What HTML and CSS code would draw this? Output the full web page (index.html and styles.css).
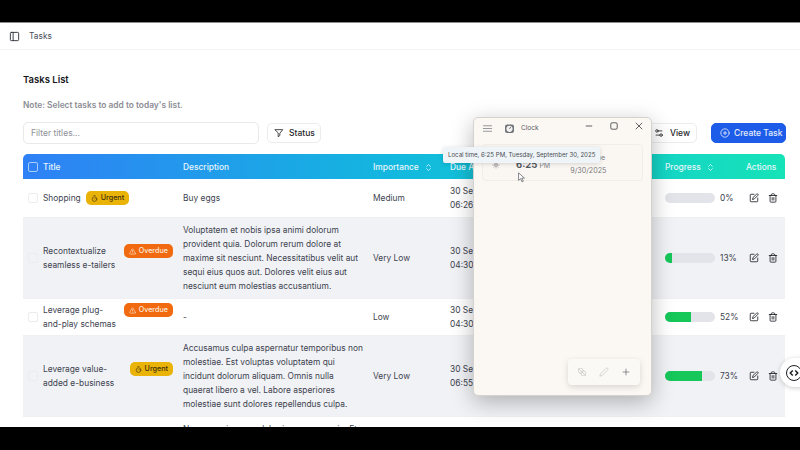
FILE: index.html
```html
<!DOCTYPE html>
<html lang="en">
<head>
    <meta charset="UTF-8">
    <meta name="viewport" content="width=device-width, initial-scale=1.0">
    <title>Tasks</title>
    <link rel="stylesheet" href="styles.css">
</head>
<body>

    <!-- icons used more than once -->
    <svg class="defs" width="0" height="0">
        <symbol id="i-timer" viewBox="0 0 24 24"><path d="M10 2h4M12 14l3-3"/><circle cx="12" cy="14" r="8"/></symbol>
        <symbol id="i-alert" viewBox="0 0 24 24"><path d="M21.7 18 13.7 4a2 2 0 0 0-3.5 0l-8 14a2 2 0 0 0 1.8 3h16a2 2 0 0 0 1.7-3Z"/><path d="M12 9v4M12 17h.01"/></symbol>
        <symbol id="i-sort" viewBox="0 0 24 24"><path d="m7 15 5 5 5-5M7 9l5-5 5 5"/></symbol>
        <symbol id="i-edit" viewBox="0 0 24 24"><path d="M12 3H5a2 2 0 0 0-2 2v14a2 2 0 0 0 2 2h14a2 2 0 0 0 2-2v-7"/><path d="M18.4 2.6a2.1 2.1 0 0 1 3 3L12.4 14.600l-4 1 1-4Z"/></symbol>
        <symbol id="i-trash" viewBox="0 0 24 24"><path d="M3 6h18M19 6v14a2 2 0 0 1-2 2H7a2 2 0 0 1-2-2V6M8 6V4a2 2 0 0 1 2-2h4a2 2 0 0 1 2 2v2M10 11v6M14 11v6"/></symbol>
    </svg>

    <div class="black-bar top"></div>

    <div class="app">
        <header class="topbar">
            <svg class="icon panel-icon" viewBox="0 0 24 24"><rect x="3" y="3" width="18" height="18" rx="2"/><path d="M9 3v18"/></svg>
            <span>Tasks</span>
        </header>

        <main class="content">
            <h1>Tasks List</h1>
            <p class="note">Note: Select tasks to add to today's list.</p>

            <div class="toolbar">
                <input class="filter" type="text" placeholder="Filter titles...">
                <button class="btn status-btn">
                    <svg class="icon" viewBox="0 0 24 24"><path d="M3 4h18l-7 8.500V18l-4 3v-8.500Z"/></svg>
                    Status
                </button>
                <button class="btn view-btn">
                    <svg class="icon" viewBox="0 0 24 24"><path d="M14 17H5M19 7h-9"/><circle cx="17" cy="17" r="3"/><circle cx="7" cy="7" r="3"/></svg>
                    View
                </button>
                <button class="btn create-btn">
                    <svg class="icon" viewBox="0 0 24 24"><circle cx="12" cy="12" r="10"/><path d="M8 12h8M12 8v8"/></svg>
                    Create Task
                </button>
            </div>

            <table class="tasks">
                <colgroup>
                    <col class="c-title"><col class="c-desc"><col class="c-imp"><col class="c-due"><col class="c-prog"><col class="c-act">
                </colgroup>
                <thead>
                    <tr>
                        <th><div class="title-cell"><span class="check head-check"></span>Title</div></th>
                        <th>Description</th>
                        <th>Importance <svg class="icon sort"><use href="#i-sort"/></svg></th>
                        <th>Due At</th>
                        <th>Progress <svg class="icon sort"><use href="#i-sort"/></svg></th>
                        <th class="actions-head">Actions</th>
                    </tr>
                </thead>
                <tbody>
                    <tr>
                        <td><div class="title-cell"><span class="check"></span><div class="title-main"><span>Shopping</span><span class="badge urgent"><svg class="icon"><use href="#i-timer"/></svg>Urgent</span></div></div></td>
                        <td>Buy eggs</td>
                        <td>Medium</td>
                        <td>30 Sep 2025<br>06:26 PM</td>
                        <td><div class="progress"><div class="bar"><div class="fill" style="width: 0%"></div></div><span>0%</span></div></td>
                        <td><div class="actions"><svg class="icon"><use href="#i-edit"/></svg><svg class="icon"><use href="#i-trash"/></svg></div></td>
                    </tr>
                    <tr>
                        <td><div class="title-cell"><span class="check"></span><div class="title-main"><span>Recontextualize seamless e-tailers</span><span class="badge overdue"><svg class="icon"><use href="#i-alert"/></svg>Overdue</span></div></div></td>
                        <td>Voluptatem et nobis ipsa animi dolorum provident quia. Dolorum rerum dolore at maxime sit nesciunt. Necessitatibus velit aut sequi eius quos aut. Dolores velit eius aut nesciunt eum molestias accusantium.</td>
                        <td>Very Low</td>
                        <td>30 Sep 2025<br>04:30 PM</td>
                        <td><div class="progress"><div class="bar"><div class="fill" style="width: 13%"></div></div><span>13%</span></div></td>
                        <td><div class="actions"><svg class="icon"><use href="#i-edit"/></svg><svg class="icon"><use href="#i-trash"/></svg></div></td>
                    </tr>
                    <tr>
                        <td><div class="title-cell"><span class="check"></span><div class="title-main"><span>Leverage plug-and-play schemas</span><span class="badge overdue"><svg class="icon"><use href="#i-alert"/></svg>Overdue</span></div></div></td>
                        <td>-</td>
                        <td>Low</td>
                        <td>30 Sep 2025<br>04:30 PM</td>
                        <td><div class="progress"><div class="bar"><div class="fill" style="width: 52%"></div></div><span>52%</span></div></td>
                        <td><div class="actions"><svg class="icon"><use href="#i-edit"/></svg><svg class="icon"><use href="#i-trash"/></svg></div></td>
                    </tr>
                    <tr>
                        <td><div class="title-cell"><span class="check"></span><div class="title-main"><span>Leverage value-added e-business</span><span class="badge urgent"><svg class="icon"><use href="#i-timer"/></svg>Urgent</span></div></div></td>
                        <td>Accusamus culpa aspernatur temporibus non molestiae. Est voluptas voluptatem qui incidunt dolorum aliquam. Omnis nulla quaerat libero a vel. Labore asperiores molestiae sunt dolores repellendus culpa.</td>
                        <td>Very Low</td>
                        <td>30 Sep 2025<br>06:55 PM</td>
                        <td><div class="progress"><div class="bar"><div class="fill" style="width: 73%"></div></div><span>73%</span></div></td>
                        <td><div class="actions"><svg class="icon"><use href="#i-edit"/></svg><svg class="icon"><use href="#i-trash"/></svg></div></td>
                    </tr>
                    <tr>
                        <td></td>
                        <td>Nemo omnis neque laboriosam ea non in. Et</td>
                        <td></td><td></td><td></td><td></td>
                    </tr>
                </tbody>
            </table>
        </main>

        <!-- round floating button on the right edge -->
        <div class="float-btn">
            <div class="float-ring">
                <svg viewBox="0 0 24 24"><path d="m9 6-6 6 6 6M15 6l6 6-6 6"/></svg>
            </div>
        </div>
    </div>

    <div class="black-bar bottom"></div>

    <!-- Clock window on top of the page -->
    <div class="clock">
        <div class="clock-title">
            <svg class="icon menu" viewBox="0 0 24 24"><path d="M3 6h18M3 12h18M3 18h18"/></svg>
            <svg class="clock-logo" viewBox="0 0 16 16"><rect x="1.500" y="2" width="13" height="12.500" rx="3" fill="#6f7278"/><circle cx="8" cy="8.500" r="4.500" fill="#f3f2f0"/><path d="M8 8.500 10 5.500" stroke="#555" stroke-width="1.200"/></svg>
            <span class="clock-name">Clock</span>
            <div class="win-btns">
                <svg viewBox="0 0 10 10"><path d="M1 5h8"/></svg>
                <svg viewBox="0 0 10 10"><rect x="1" y="1" width="8" height="8" rx="1.500"/></svg>
                <svg viewBox="0 0 10 10"><path d="m1 1 8 8M9 1 1 9"/></svg>
            </div>
        </div>
        <div class="clock-card">
            <svg class="sun" viewBox="0 0 24 24"><circle cx="12" cy="12" r="4"/><path d="M12 2v3M12 19v3M2 12h3M19 12h3M5 5l2 2M17 17l2 2M5 19l2-2M17 7l2-2"/></svg>
            <div class="clock-time"><b>6:25</b> PM</div>
            <div class="clock-place">
                <span>Local time</span>
                <span>9/30/2025</span>
            </div>
        </div>
        <div class="clock-tools">
            <svg viewBox="0 0 24 24"><circle cx="9" cy="9" r="6"/><circle cx="15" cy="15" r="6"/><path d="M3 3l18 18"/></svg>
            <svg viewBox="0 0 24 24"><path d="M17 3a2.800 2.800 0 0 1 4 4L7.500 20.500 2 22l1.500-5.500Z"/></svg>
            <svg class="plus" viewBox="0 0 24 24"><path d="M12 4v16M4 12h16"/></svg>
        </div>
    </div>

    <div class="tooltip">Local time, 6:25 PM, Tuesday, September 30, 2025</div>

    <svg class="cursor" viewBox="0 0 12 18"><path d="M1 1v13l3.500-3 2.500 5.500 2-1L6.500 10H11Z"/></svg>

</body>
</html>
```

FILE: styles.css
```css
* {
    box-sizing: border-box;
}
body {
    margin: 0;
    width: 800px;
    height: 450px;
    overflow: hidden;
    position: relative;
    display: flex;
    flex-direction: column;
    font-family: Inter, "Noto Sans", sans-serif;
    font-size: 8.400px;
    line-height: 14px;
    color: #3d4350;
    background: #000;
}
.defs {
    position: absolute;
}
.black-bar {
    background: #000;
    flex: none;
}
.black-bar.top {
    height: 22px;
}
.black-bar.bottom {
    height: 23px;
}
.icon {
    width: 10px;
    height: 10px;
    fill: none;
    stroke: currentColor;
    stroke-width: 2;
    stroke-linecap: round;
    stroke-linejoin: round;
    flex: none;
}

.app {
    height: 405px;
    background: #fff;
    overflow: hidden;
    position: relative;
    border-top: 1px solid #8a8a8a;
}
.topbar {
    height: 27px;
    display: flex;
    align-items: center;
    gap: 9px;
    padding-left: 9px;
    border-bottom: 1px solid #f4f4f5;
    color: #4a4f5b;
}
.panel-icon {
    width: 11px;
    height: 11px;
    color: #2c3038;
}
.content {
    padding: 23px 14px 0 23px;
}
h1 {
    margin: 0;
    font-size: 9.500px;
    line-height: 14px;
    font-weight: 600;
    color: #18181b;
}
.note {
    margin: 11px 0 10px;
    font-weight: 600;
    color: #8b8d94;
}

.toolbar {
    display: flex;
    align-items: center;
    height: 22px;
    margin-bottom: 10px;
}
.filter {
    width: 236px;
    height: 22px;
    padding: 0 7px;
    border: 1px solid #e9e9ec;
    border-radius: 5px;
    font: 8.500px Inter, sans-serif;
    margin-right: 8px;
}
.filter::placeholder {
    color: #8e9097;
}
.btn {
    height: 20px;
    display: flex;
    align-items: center;
    gap: 5px;
    border: 1px solid #ececef;
    border-radius: 5px;
    background: #fff;
    font: 500 8.500px Inter, sans-serif;
    color: #27272a;
    padding: 0 6px;
}
.status-btn {
    width: 54px;
}
.view-btn {
    width: 54px;
    margin-left: auto;
    margin-right: 14px;
    justify-content: flex-end;
    gap: 6px;
}
.create-btn {
    width: 75px;
    padding-left: 8px;
    background: #1d5ce8;
    border-color: #1d5ce8;
    color: #e6edfd;
    gap: 4px;
    white-space: nowrap;
}

.tasks {
    width: 762px;
    table-layout: fixed;
    border-collapse: collapse;
}
.c-title { width: 150px; }
.c-desc { width: 190px; }
.c-imp { width: 77px; }
.c-due { width: 215px; }
.c-prog { width: 83px; }
.c-act { width: 47px; }
.tasks thead tr {
    height: 25px;
    background: linear-gradient(90deg, #2f80f6 0%, #12b9de 50%, #16e3b8 100%);
    color: #e8f6fc;
}
.tasks th {
    font-weight: 500;
    text-align: left;
    padding: 0 10px;
    white-space: nowrap;
}
.tasks th:first-child {
    padding-left: 5px;
    border-top-left-radius: 5px;
}
.tasks th:last-child {
    border-top-right-radius: 5px;
}
.tasks .actions-head {
    padding: 0 0 0 8px;
}
.sort {
    width: 9px;
    height: 9px;
    margin-left: 3px;
    vertical-align: -2px;
}
.tasks td {
    padding: 5px 0 5px 10px;
    vertical-align: middle;
    border-bottom: 1px solid #f0f0f3;
}
.tasks td:first-child {
    padding: 5px 0 5px 5px;
}
.tasks td:last-child {
    padding: 5px 0 5px 11px;
}
.tasks tbody tr:nth-child(even) {
    background: #f1f2f5;
}
.tasks tbody tr:nth-child(3) td {
    padding-top: 4px;
    padding-bottom: 4px;
}
.title-cell {
    display: flex;
    align-items: center;
    gap: 5px;
}
.title-main {
    display: flex;
    align-items: flex-start;
    gap: 5px;
    min-width: 0;
}
.check {
    width: 10px;
    height: 10px;
    border: 1px solid #ececef;
    border-radius: 2px;
    flex: none;
}
.head-check {
    border-color: #a9cdf9;
}
.badge {
    display: flex;
    align-items: center;
    gap: 3px;
    height: 14px;
    padding: 0 5px;
    border-radius: 5px;
    font-size: 7.200px;
    font-weight: 500;
    white-space: nowrap;
    flex: none;
}
.badge .icon {
    width: 7px;
    height: 7px;
}
.urgent {
    background: #eab308;
    color: #3b2f08;
}
.overdue {
    background: #f26a10;
    color: #fdeadb;
}

.progress {
    display: flex;
    align-items: center;
    gap: 5px;
}
.bar {
    width: 50px;
    height: 10px;
    border-radius: 5px;
    background: #e3e4e9;
    overflow: hidden;
    flex: none;
}
.fill {
    height: 100%;
    background: #16c75a;
}
.actions {
    display: flex;
    gap: 9px;
    color: #1f2126;
}

.float-btn {
    position: absolute;
    left: 780px;
    top: 335px;
    width: 40px;
    height: 29px;
    border-radius: 15px;
    background: #fff;
    box-shadow: 0 1px 5px rgba(0, 0, 0, 0.2);
    display: flex;
    align-items: center;
    padding-left: 6px;
}
.float-ring {
    width: 16px;
    height: 16px;
    border: 1.500px solid #1b1d22;
    border-radius: 50%;
    display: flex;
    align-items: center;
    justify-content: center;
    flex: none;
}
.float-ring svg {
    width: 10px;
    height: 10px;
    fill: none;
    stroke: #1b1d22;
    stroke-width: 3.500;
    flex: none;
}

.clock {
    position: absolute;
    left: 473px;
    top: 117px;
    width: 179px;
    height: 279px;
    background: #fbf8f4;
    border: 1px solid #d5d3d0;
    border-radius: 5px;
    box-shadow: 0 6px 22px rgba(0, 0, 0, 0.28);
    color: #55585e;
}
.clock-title {
    height: 20px;
    display: flex;
    align-items: center;
    padding-left: 8px;
    font-size: 6.500px;
}
.menu {
    width: 11px;
    height: 11px;
    stroke-width: 1.300;
    margin-right: 11px;
}
.clock-logo {
    width: 11px;
    height: 11px;
    margin-right: 6px;
}
.win-btns {
    margin-left: auto;
    display: flex;
    gap: 17px;
    padding-right: 8px;
    margin-top: -4px;
}
.win-btns svg {
    width: 8px;
    height: 8px;
    fill: none;
    stroke: #3a3b3e;
    stroke-width: 1;
}
.clock-card {
    height: 37px;
    margin: 6px 8px 0;
    border: 1px solid #f1eee9;
    border-radius: 4px;
    display: flex;
    align-items: center;
    background: #faf7f3;
}
.sun {
    width: 8px;
    height: 8px;
    margin: 4px 0 0 9px;
    fill: none;
    stroke: #6c6e72;
    stroke-width: 2;
}
.clock-time {
    margin: 6px 0 0 16px;
    font-size: 7px;
    color: #85868a;
    white-space: nowrap;
}
.clock-time b {
    font-size: 9.500px;
    color: #55585e;
}
.clock-place {
    margin-left: 20px;
    display: flex;
    flex-direction: column;
    font-size: 7.200px;
    line-height: 13px;
    white-space: nowrap;
    color: #7a7b7f;
    padding-top: 2px;
}
.clock-tools {
    position: absolute;
    right: 11px;
    bottom: 10px;
    width: 72px;
    height: 26px;
    display: flex;
    align-items: center;
    justify-content: space-between;
    padding: 0 9px;
    background: #fbf9f6;
    border-radius: 4px;
    box-shadow: 0 2px 6px rgba(0, 0, 0, 0.14);
}
.clock-tools svg {
    width: 10px;
    height: 10px;
    fill: none;
    stroke: #c3c2bf;
    stroke-width: 1.500;
}
.clock-tools .plus {
    stroke: #55585e;
}
.tooltip {
    position: absolute;
    left: 443px;
    top: 147px;
    width: 157px;
    height: 16px;
    background: #eef4f7;
    border-radius: 2px;
    box-shadow: 0 1px 4px rgba(0, 0, 0, 0.15);
    font-size: 6.100px;
    line-height: 16px;
    padding-left: 5px;
    white-space: nowrap;
    color: #4a4d52;
}
.cursor {
    position: absolute;
    left: 518px;
    top: 172px;
    width: 7px;
    height: 11px;
    fill: #fff;
    stroke: #55585e;
    stroke-width: 1.200;
}
```
